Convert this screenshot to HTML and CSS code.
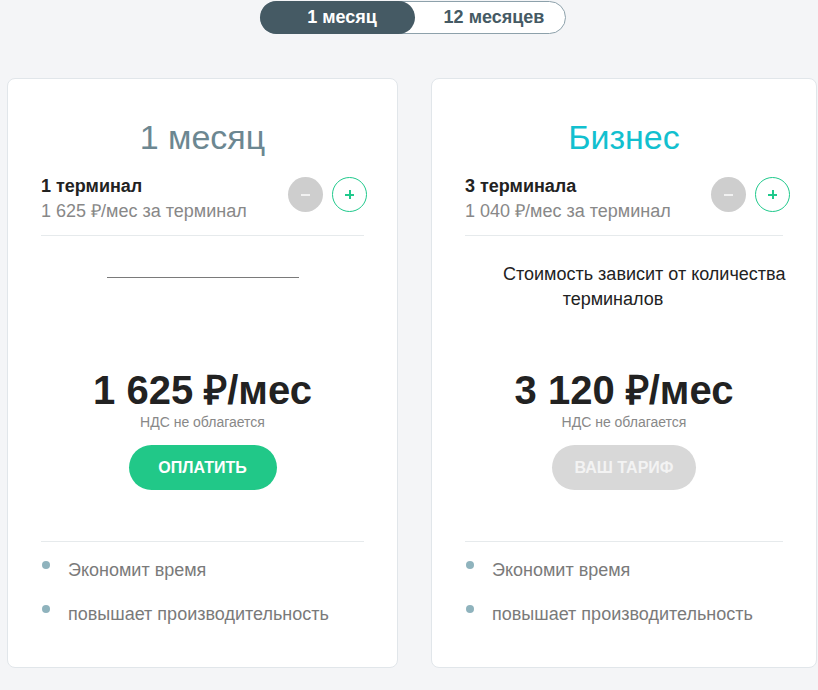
FILE: index.html
```html
<!DOCTYPE html>
<html lang="ru">
<head>
<meta charset="utf-8">
<link rel="stylesheet" href="styles.css">
</head>
<body>
<div class="page">
  <div class="toggle-wrap">
    <div class="toggle">
      <div class="tog active">1 месяц</div>
      <div class="tog">12 месяцев</div>
    </div>
  </div>
  <div class="cards">
    <div class="card">
      <div class="title">1 месяц</div>
      <div class="terms">
        <div class="terms-text">
          <div class="terms-count">1 терминал</div>
          <div class="terms-price">1 625 ₽/мес за терминал</div>
        </div>
        <div class="ctrls">
          <div class="ctl minus"><span></span></div>
          <div class="ctl plus"><span></span></div>
        </div>
      </div>
      <div class="middle">
        <div class="underline"></div>
      </div>
      <div class="price">1 625 ₽/мес</div>
      <div class="vat">НДС не облагается</div>
      <div class="btn pay">ОПЛАТИТЬ</div>
      <ul class="features">
        <li>Экономит время</li>
        <li>повышает производительность</li>
      </ul>
    </div>
    <div class="card">
      <div class="title biz">Бизнес</div>
      <div class="terms">
        <div class="terms-text">
          <div class="terms-count">3 терминала</div>
          <div class="terms-price">1 040 ₽/мес за терминал</div>
        </div>
        <div class="ctrls wide">
          <div class="ctl minus"><span></span></div>
          <div class="ctl plus"><span></span></div>
        </div>
      </div>
      <div class="middle">
        <div class="note">Стоимость зависит от количества<br>терминалов</div>
      </div>
      <div class="price">3 120 ₽/мес</div>
      <div class="vat">НДС не облагается</div>
      <div class="btn current">ВАШ ТАРИФ</div>
      <ul class="features">
        <li>Экономит время</li>
        <li>повышает производительность</li>
      </ul>
    </div>
  </div>
</div>
</body>
</html>
```
FILE: styles.css
```css
html, body {
  margin: 0;
  padding: 0;
  background: #f4f5f7;
  font-family: "Liberation Sans", Arial, sans-serif;
}
.page {
  width: 818px;
  height: 690px;
  overflow: hidden;
}
.toggle-wrap {
  padding-top: 1px;
  padding-left: 260px;
}
.toggle {
  display: flex;
  width: 304px;
  height: 31px;
  border: 1px solid #8da1ab;
  border-radius: 17px;
  background: #fff;
}
.tog {
  flex: 1;
  display: flex;
  align-items: center;
  justify-content: center;
  padding-left: 9px;
  font-size: 18px;
  font-weight: bold;
  color: #455a64;
  border-radius: 17px;
  margin: -1px;
}
.tog.active {
  flex: 0 0 146px;
  background: #455a64;
  color: #fff;
}
.cards {
  display: grid;
  grid-template-columns: 391px 386px;
  column-gap: 33px;
  padding-left: 7px;
  margin-top: 44px;
}
.card {
  background: #fff;
  border: 1px solid #e1e6ea;
  border-radius: 8px;
  height: 590px;
  padding: 0 33px;
  display: flex;
  flex-direction: column;
  box-sizing: border-box;
}
.title {
  font-size: 34px;
  color: #6c8791;
  text-align: center;
  line-height: 40px;
  margin-top: 38px;
}
.title.biz {
  color: #12c0cf;
}
.terms {
  display: flex;
  justify-content: space-between;
  margin-top: 17px;
  padding-bottom: 11px;
  border-bottom: 1px solid #e6eaec;
}
.terms-count {
  font-size: 18px;
  font-weight: bold;
  color: #222;
  line-height: 25px;
}
.terms-price {
  font-size: 18px;
  color: #888;
  line-height: 25px;
}
.ctrls {
  display: flex;
  gap: 9px;
  margin-top: 3px;
  margin-right: -3px;
}
.ctrls.wide {
  margin-right: -7px;
}
.ctl {
  width: 35px;
  height: 35px;
  border-radius: 50%;
  box-sizing: border-box;
  position: relative;
}
.ctl.minus {
  background: #cecece;
}
.ctl.plus {
  border: 1px solid #20c98c;
  background: #fff;
}
.ctl span {
  position: absolute;
  left: 50%;
  top: 50%;
  width: 9px;
  height: 2px;
  margin: -1px 0 0 -4.5px;
  background: #fff;
}
.ctl.minus span {
  background: #f1f1f1;
}
.ctl.plus span {
  background: #20c98c;
}
.ctl.plus span::after {
  content: "";
  position: absolute;
  left: 3.5px;
  top: -3.5px;
  width: 2px;
  height: 9px;
  background: #20c98c;
}
.middle {
  height: 132px;
  position: relative;
}
.underline {
  width: 192px;
  height: 1px;
  background: #7a7a7a;
  margin: 41px auto 0;
}
.note {
  width: 220px;
  margin: 26px 0 0 38px;
  text-align: center;
  white-space: nowrap;
  font-size: 18px;
  line-height: 25px;
  color: #222;
}
.price {
  font-size: 40px;
  font-weight: bold;
  color: #222;
  text-align: center;
  line-height: 44px;
}
.vat {
  font-size: 14px;
  color: #888;
  text-align: center;
  line-height: 16px;
  margin-top: 2px;
}
.btn {
  align-self: center;
  height: 45px;
  border-radius: 23px;
  display: flex;
  align-items: center;
  justify-content: center;
  font-size: 16px;
  font-weight: bold;
  color: #fff;
  margin-top: 15px;
}
.btn.pay {
  width: 148px;
  background: #21c888;
}
.btn.current {
  width: 144px;
  background: #d8d8d8;
  color: #f3f3f3;
}
.features {
  list-style: none;
  margin: 51px 0 0;
  padding: 16px 0 0;
  border-top: 1px solid #e6eaec;
}
.features li {
  position: relative;
  padding-left: 27px;
  font-size: 18px;
  color: #7a7a7a;
  line-height: 24px;
  margin-bottom: 20px;
}
.features li::before {
  content: "";
  position: absolute;
  left: 1px;
  top: 3px;
  width: 8px;
  height: 8px;
  border-radius: 50%;
  background: #8fb3bd;
}
```
